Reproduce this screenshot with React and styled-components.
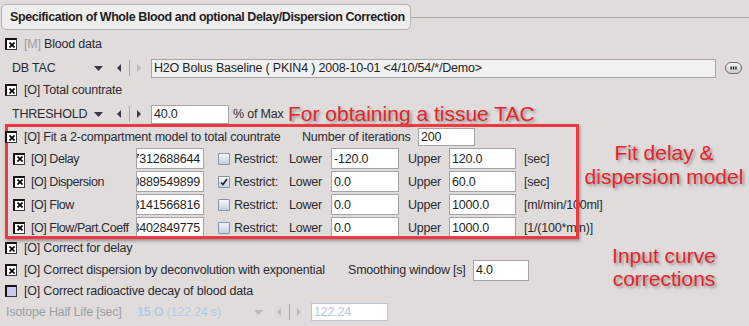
import React from "react";
import styled, { createGlobalStyle } from "styled-components";

const GlobalStyle = createGlobalStyle`
  body {
    margin: 0;
    background: #dfdcdb;
  }
`;

const Page = styled.div`
  width: 749px;
  height: 326px;
  overflow: hidden;
  box-sizing: border-box;
  padding-top: 4px;
  background: #dfdcdb;
  font-family: "Liberation Sans", Arial, sans-serif;
  font-size: 12.5px;
  letter-spacing: -0.2px;
  color: #2b2b33;
`;

const HeaderRow = styled.div`
  display: flex;
  align-items: center;
  height: 26px;
  padding-left: 1px;
`;

const Legend = styled.div`
  width: 410px;
  height: 26px;
  box-sizing: border-box;
  flex-shrink: 0;
  display: flex;
  align-items: center;
  padding: 0 8px;
  border: 1px solid #b4b2b2;
  border-radius: 5px;
  background: #efeeee;
  font-weight: bold;
  letter-spacing: -0.4px;
  color: #1e1e24;
  white-space: nowrap;
`;

const Rule = styled.div`
  flex: 1;
  height: 1px;
  background: #a9a7a7;
`;

const Row = styled.div`
  display: flex;
  align-items: center;
  height: ${({ $h }) => $h}px;
  margin-top: ${({ $mt }) => $mt || 0}px;
  padding-left: ${({ $pl }) => $pl || 0}px;
  white-space: nowrap;
`;

const Label = styled.span`
  flex-shrink: 0;
  ${({ $w }) => ($w ? `width: ${$w}px;` : "")}
  margin-left: ${({ $ml }) => $ml || 0}px;
  ${({ $tight }) => ($tight ? "letter-spacing: -0.45px;" : "")}
  color: ${({ $tone }) =>
    $tone === "muted" ? "#9c9c9f" : $tone === "blue" ? "#b3c9e3" : "#2b2b33"};
`;

const Strong = styled.b`
  font-weight: bold;
`;

const Tick = styled.span`
  position: relative;
  z-index: 3;
  flex-shrink: 0;
  display: flex;
  align-items: center;
  justify-content: center;
  width: 12px;
  height: 12px;
  box-sizing: border-box;
  margin-left: ${({ $ml }) => $ml || 0}px;
  border: 1px solid #3a3a3a;
  border-top: 2px solid #141414;
  border-left: 2px solid #141414;
  background: ${({ $tint }) => ($tint ? "#cdc9ee" : "#ffffff")};
`;

const Restrict = styled.span`
  flex-shrink: 0;
  display: flex;
  align-items: center;
  justify-content: center;
  width: 12px;
  height: 12px;
  box-sizing: border-box;
  margin-left: 14px;
  border: 1px solid #8894a7;
  border-radius: 1px;
  background: linear-gradient(#f3f6fa, #c6d0dd);
`;

const Field = styled.div`
  flex-shrink: 0;
  display: flex;
  align-items: center;
  justify-content: ${({ $right }) => ($right ? "flex-end" : "flex-start")};
  width: ${({ $w }) => $w}px;
  height: ${({ $h }) => $h || 21}px;
  box-sizing: border-box;
  margin-left: ${({ $ml }) => $ml || 0}px;
  padding: 0 3px 0 2px;
  overflow: hidden;
  border: 1px solid ${({ $off }) => ($off ? "#bcc5d3" : "#a5a5a5")};
  background: ${({ $grey }) => ($grey ? "#f1f1f1" : "#ffffff")};
  color: ${({ $off }) => ($off ? "#b6c7dc" : "#1f1f26")};
`;

const Nav = styled.div`
  flex-shrink: 0;
  display: flex;
  align-items: center;
  margin-right: 10px;
  & > :nth-child(2) {
    margin-left: 14px;
  }
  & > :nth-child(3) {
    margin-left: 8px;
  }
  & > :nth-child(4) {
    margin-left: 7px;
  }
`;

const Sep = styled.span`
  width: 1px;
  height: 16px;
  background: #aaa8a8;
`;

const MoreButton = styled.svg`
  flex-shrink: 0;
  margin-left: 9px;
`;

const Section = styled.div`
  display: flex;
  margin-top: ${({ $mt }) => $mt || 0}px;
`;

const Column = styled.div`
  width: 579px;
  flex-shrink: 0;
`;

const Group = styled.div`
  position: relative;
  width: 574px;
  flex-shrink: 0;
  margin-left: 5px;
  padding: 3px 0 0 3px;
  box-sizing: border-box;
  &::after {
    content: "";
    position: absolute;
    inset: 0;
    border: 3px solid #ee3a3e;
    box-shadow: 1px 2px 3px rgba(0, 0, 0, 0.35);
    pointer-events: none;
    z-index: 2;
  }
`;

const Note = styled.div`
  flex: 1;
  padding-top: ${({ $top }) => $top}px;
  text-align: center;
  font-size: 21px;
  line-height: ${({ $lh }) => $lh}px;
  letter-spacing: 0;
  color: #e8222a;
  text-shadow: 2px 2px 3px rgba(0, 0, 0, 0.35);
  white-space: nowrap;
`;

const Callout = styled.span`
  margin-left: 4px;
  font-size: 21px;
  letter-spacing: 0;
  color: #e8222a;
  text-shadow: 2px 2px 3px rgba(0, 0, 0, 0.35);
`;

const Cross = () => (
  <svg width="6" height="6" viewBox="0 0 6 6">
    <path d="M0.5 0.5L5.5 5.5M5.5 0.5L0.5 5.5" stroke="#000" strokeWidth="1.7" />
  </svg>
);

const Check = ({ on = true, tint, ml }) => (
  <Tick $tint={tint} $ml={ml}>
    {on && <Cross />}
  </Tick>
);

const CheckMark = () => (
  <svg width="8" height="8" viewBox="0 0 8 8">
    <path d="M1 4.5L3 6.5L7 1" stroke="#222" strokeWidth="1.6" fill="none" />
  </svg>
);

const Combo = ({ off, nextOff }) => {
  const c = off ? "#b9b9bc" : "#383844";
  const n = off || nextOff ? "#b9b9bc" : "#383844";
  return (
    <Nav>
      <svg width="9" height="5" viewBox="0 0 9 5">
        <path d="M0 0H9L4.5 5Z" fill={c} />
      </svg>
      <svg width="4" height="8" viewBox="0 0 4 8">
        <path d="M4 0V8L0 4Z" fill={c} />
      </svg>
      <Sep />
      <svg width="4" height="8" viewBox="0 0 4 8">
        <path d="M0 0V8L4 4Z" fill={n} />
      </svg>
    </Nav>
  );
};

const params = [
  { name: "Delay", value: "-4.97312688644", restrict: false, lower: "-120.0", upper: "120.0", unit: "[sec]" },
  { name: "Dispersion", value: "8.0889549899", restrict: true, lower: "0.0", upper: "60.0", unit: "[sec]" },
  { name: "Flow", value: "0.3141566816", restrict: false, lower: "0.0", upper: "1000.0", unit: "[ml/min/100ml]" },
  { name: "Flow/Part.Coeff", value: "0.3402849775", restrict: false, lower: "0.0", upper: "1000.0", unit: "[1/(100*min)]" },
];

const ParamRow = ({ p }) => (
  <Row $h={23}>
    <Check ml={5} />
    <Label $w={105} $ml={6} $tight>[O] {p.name}</Label>
    <Field $w={68} $right>{p.value}</Field>
    <Restrict>{p.restrict && <CheckMark />}</Restrict>
    <Label $w={55} $ml={4}>Restrict:</Label>
    <Label $w={42}>Lower</Label>
    <Field $w={68}>{p.lower}</Field>
    <Label $w={41} $ml={9}>Upper</Label>
    <Field $w={67}>{p.upper}</Field>
    <Label $ml={8}>{p.unit}</Label>
  </Row>
);

export default function App() {
  return (
    <Page>
      <GlobalStyle />
      <HeaderRow>
        <Legend>Specification of Whole Blood and optional Delay/Dispersion Correction</Legend>
        <Rule />
      </HeaderRow>

      <Row $h={22} $mt={3} $pl={5}>
        <Check />
        <Label $ml={7}>
          <Label $tone="muted">[M]</Label> Blood data
        </Label>
      </Row>

      <Row $h={22} $mt={2} $pl={12}>
        <Label $w={82}>DB TAC</Label>
        <Combo nextOff />
        <Field $w={565} $h={19} $grey>
          H2O Bolus Baseline ( PKIN4 ) 2008-10-01 &lt;4/10/54/*/Demo&gt;
        </Field>
        <MoreButton width="17" height="12" viewBox="0 0 17 12">
          <defs>
            <linearGradient id="pill" x1="0" y1="0" x2="0" y2="1">
              <stop offset="0" stopColor="#f7f7f7" />
              <stop offset="1" stopColor="#c9c9c9" />
            </linearGradient>
          </defs>
          <rect x="0.5" y="0.5" width="16" height="11" rx="5.5" fill="url(#pill)" stroke="#6b6b6b" />
          <rect x="5.5" y="4.5" width="1.3" height="3" fill="#111" />
          <rect x="7.9" y="4.5" width="1.3" height="3" fill="#111" />
          <rect x="10.3" y="4.5" width="1.3" height="3" fill="#111" />
        </MoreButton>
      </Row>

      <Row $h={20} $mt={1} $pl={5}>
        <Check />
        <Label $ml={7}>[O] Total countrate</Label>
      </Row>

      <Row $h={22} $mt={3} $pl={12}>
        <Label $w={82}>THRESHOLD</Label>
        <Combo />
        <Field $w={78} $h={19}>40.0</Field>
        <Label $w={51} $ml={4}>% of Max</Label>
        <Callout>For obtaining a tissue TAC</Callout>
      </Row>

      <Section $mt={-1}>
        <Group>
          <Row $h={20}>
            <Check ml={-3} />
            <Label $w={278} $ml={7}>[O] Fit a 2-compartment model to total countrate</Label>
            <Label $w={116}>Number of iterations</Label>
            <Field $w={57} $h={18}>200</Field>
          </Row>
          {params.map((p) => (
            <ParamRow key={p.name} p={p} />
          ))}
        </Group>
        <Note $top={17} $lh={24}>
          Fit delay &amp;
          <br />
          dispersion model
        </Note>
      </Section>

      <Section $mt={-1}>
        <Column>
          <Row $h={20} $pl={5}>
            <Check />
            <Label $ml={7}>[O] Correct for delay</Label>
          </Row>
          <Row $h={24} $pl={5}>
            <Check />
            <Label $w={324} $ml={7}>[O] Correct dispersion by deconvolution with exponential</Label>
            <Label $w={125}>Smoothing window [s]</Label>
            <Field $w={56}>4.0</Field>
          </Row>
          <Row $h={18} $pl={5}>
            <Check on={false} tint />
            <Label $ml={7}>[O] Correct radioactive decay of blood data</Label>
          </Row>
          <Row $h={24} $pl={6}>
            <Label $w={131} $tone="muted">Isotope Half Life [sec]</Label>
            <Label $w={117} $tone="blue">
              <Strong>15 O</Strong> (122.24 s)
            </Label>
            <Combo off />
            <Field $w={77} $h={18} $off>122.24</Field>
          </Row>
        </Column>
        <Note $top={6} $lh={23}>
          Input curve
          <br />
          corrections
        </Note>
      </Section>
    </Page>
  );
}
